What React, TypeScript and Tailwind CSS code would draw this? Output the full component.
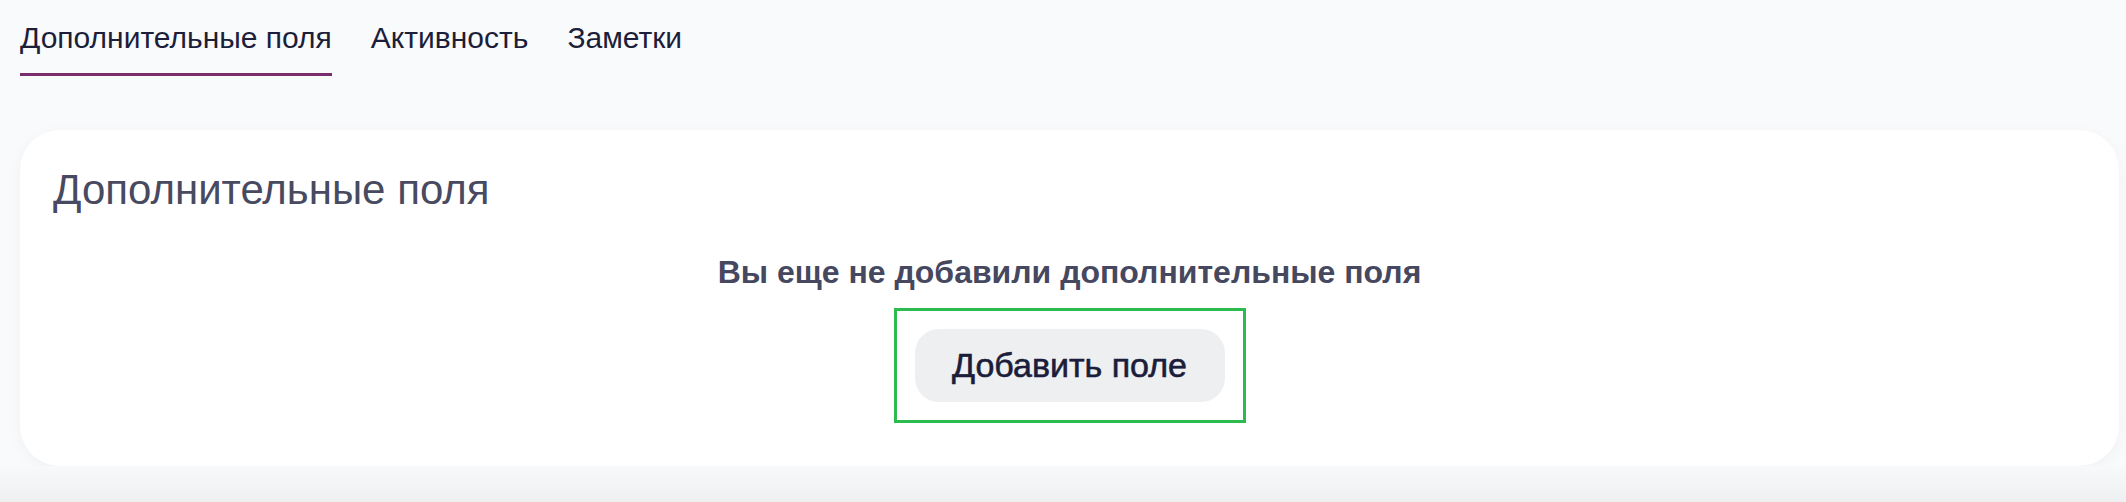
const tabs = ['Дополнительные поля', 'Активность', 'Заметки'];

export default function App() {
  const active = 0;

  return (
    <div
      className="min-h-[502px] w-full bg-[#f9fafc] flex flex-col"
      style={{ fontFamily: '"Liberation Sans", Arial, sans-serif' }}
    >
      {/* Tabs */}
      <div className="flex gap-[39px] pl-[20px] pt-[18px] h-[130px] items-start">
        {tabs.map((t, i) => (
          <div key={t} className="flex flex-col">
            <span className="text-[30px] leading-[40px] text-[#1c1e3a]">{t}</span>
            {i === active ? (
              <span className="mt-[15px] h-[3px] bg-[#7b2c6f]" />
            ) : null}
          </div>
        ))}
      </div>

      {/* Card */}
      <div className="ml-[20px] mr-[7px] bg-white rounded-[40px] shadow-[0_4px_16px_rgba(30,35,60,0.04)] pl-[33px] pr-[33px] pt-[36px] pb-[43px]">
        <h2 className="text-[42px] leading-[48px] text-[#474a60]">Дополнительные поля</h2>
        <div className="flex flex-col items-center mt-[38px]">
          <p className="text-[32px] leading-[40px] font-bold text-[#46485f]">
            Вы еще не добавили дополнительные поля
          </p>
          <div className="mt-[16px] border-[3px] border-[#2cbb4f] p-[18px]">
            <button className="h-[73px] w-[310px] rounded-[24px] bg-[#eeeff1] text-[34px] text-[#1b1d3a] [-webkit-text-stroke:0.6px_#1b1d3a] flex items-center justify-center">
              Добавить поле
            </button>
          </div>
        </div>
      </div>

      <div className="flex-1 min-h-[37px] bg-gradient-to-b from-[#f8f9fa] to-[#eeeff1]" />
    </div>
  );
}
